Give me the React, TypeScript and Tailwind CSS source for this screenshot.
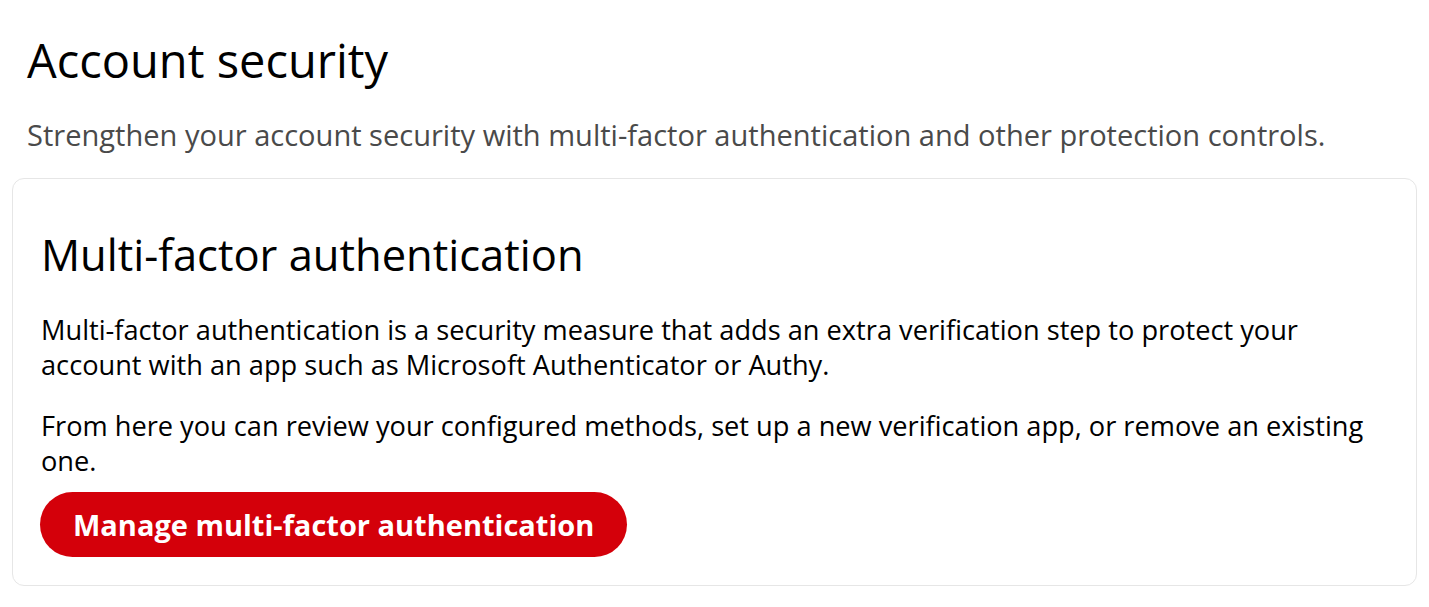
export default function App() {
  return (
    <div className="min-h-screen bg-white text-black" style={{ fontFamily: '"Open Sans", sans-serif' }}>
      <div className="px-3 pt-[32px]">
        <h1 className="pl-[15px] text-[47px] leading-[1.2] font-normal">Account security</h1>
        <p className="pl-[15px] mt-[29px] text-[29.05px] leading-[1.3] text-[#4a4a4a]">
          Strengthen your account security with multi-factor authentication and other protection controls.
        </p>
        <div className="mt-[23px] border border-[#e6e6e6] rounded-xl px-[28px] pt-[50px] pb-[28px]">
          <h2 className="text-[43.5px] leading-[1.2] font-normal">Multi-factor authentication</h2>
          <p className="mt-[31px] text-[27.2px] leading-[35px]">
            Multi-factor authentication is a security measure that adds an extra verification step to protect your account with an app such as Microsoft Authenticator or Authy.
          </p>
          <p className="mt-[26px] text-[27.2px] leading-[35px]">
            From here you can review your configured methods, set up a new verification app, or remove an existing one.
          </p>
          <button className="-ml-px mt-[14px] h-[65px] px-[33px] rounded-full bg-[#d4000a] text-white font-bold text-[29px] leading-none">
            Manage multi-factor authentication
          </button>
        </div>
      </div>
    </div>
  );
}
